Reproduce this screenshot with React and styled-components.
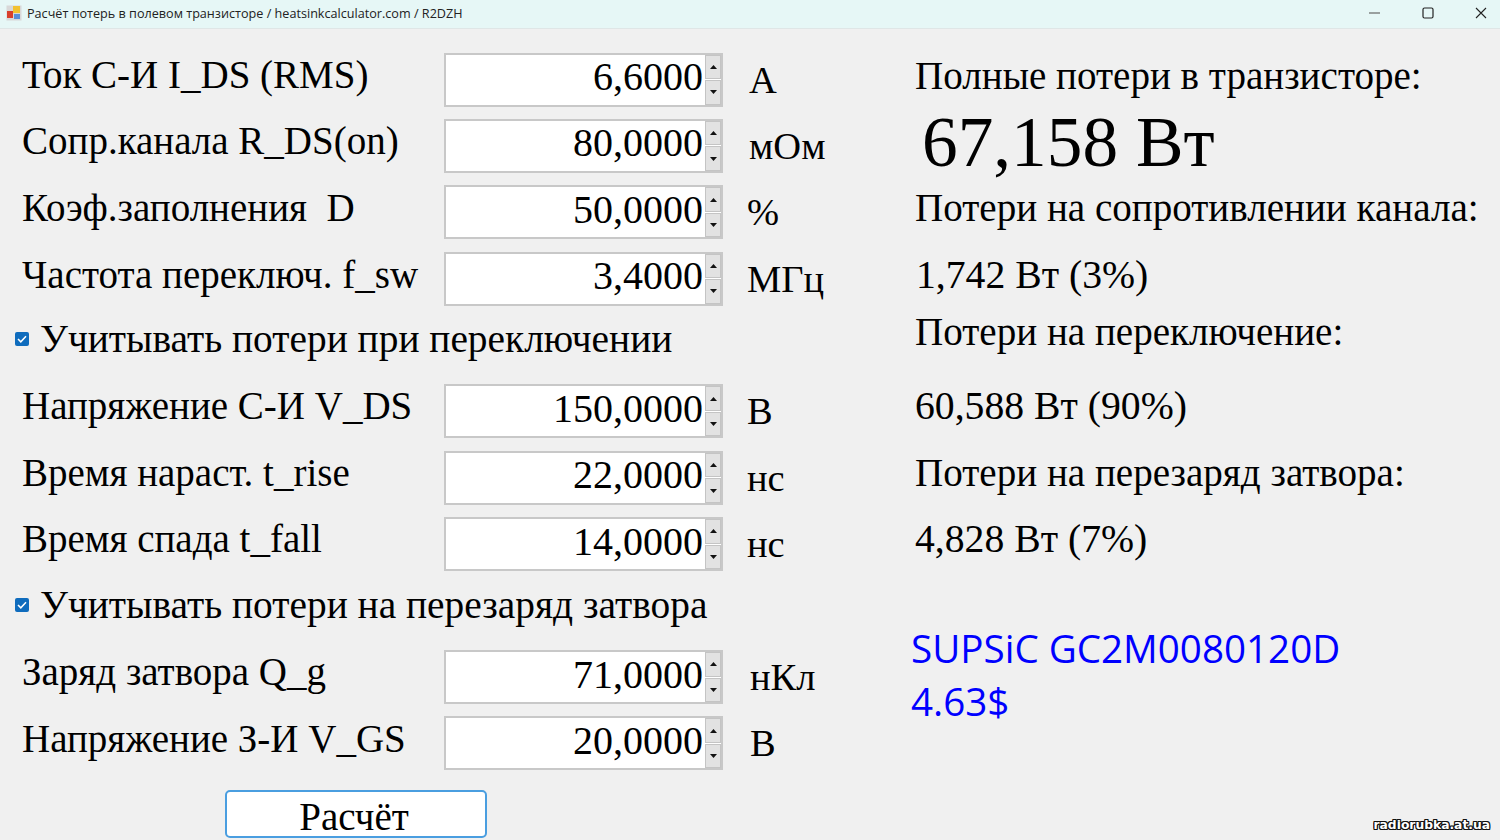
import React from 'react'
import styled, { createGlobalStyle } from 'styled-components'

const GlobalStyle = createGlobalStyle`
html, body {
  margin: 0;
  padding: 0;
  background: #f0f0f0;
}
`

const fields = [
  { type: 'field', label: 'Ток С-И I_DS (RMS)', value: '6,6000', unit: 'А', unitX: 26, labelUp: 10 },
  { type: 'field', label: 'Сопр.канала R_DS(on)', value: '80,0000', unit: 'мОм', unitX: 26, labelUp: 10 },
  { type: 'field', label: 'Коэф.заполнения  D', value: '50,0000', unit: '%', unitX: 24, labelUp: 9 },
  { type: 'field', label: 'Частота переключ. f_sw', value: '3,4000', unit: 'МГц', unitX: 24, labelUp: 9 },
  { type: 'check', label: 'Учитывать потери при переключении' },
  { type: 'field', label: 'Напряжение С-И V_DS', value: '150,0000', unit: 'В', unitX: 24, labelUp: 12 },
  { type: 'field', label: 'Время нараст. t_rise', value: '22,0000', unit: 'нс', unitX: 24, labelUp: 10 },
  { type: 'field', label: 'Время спада t_fall', value: '14,0000', unit: 'нс', unitX: 24, labelUp: 11 },
  { type: 'check', label: 'Учитывать потери на перезаряд затвора' },
  { type: 'field', label: 'Заряд затвора Q_g', value: '71,0000', unit: 'нКл', unitX: 27, labelUp: 12 },
  { type: 'field', label: 'Напряжение З-И V_GS', value: '20,0000', unit: 'В', unitX: 27, labelUp: 10 },
]

function AppIcon() {
  return (
    <svg width="16" height="16" viewBox="0 0 16 16">
      <rect x="0.5" y="0.5" width="15" height="15" fill="#d8d8d8" />
      <rect x="1" y="6" width="6" height="7" fill="#d8402c" />
      <rect x="7" y="1" width="7" height="7" fill="#f2c230" />
      <rect x="8" y="9" width="6" height="5" fill="#5a8fd8" />
    </svg>
  )
}

function Spinner() {
  return (
    <SpinBox>
      <SpinButton>
        <svg width="7" height="4" viewBox="0 0 7 4"><path d="M3.5 0 7 4H0z" fill="#111" /></svg>
      </SpinButton>
      <SpinButton>
        <svg width="7" height="4" viewBox="0 0 7 4"><path d="M0 0h7L3.500 4z" fill="#111" /></svg>
      </SpinButton>
    </SpinBox>
  )
}

export default function App() {
  return (
    <Page>
      <GlobalStyle />
      <TitleBar>
        <TitleLeft>
          <AppIcon />
          <TitleText>Расчёт потерь в полевом транзисторе / heatsinkcalculator.com / R2DZH</TitleText>
        </TitleLeft>
        <WindowButtons>
          <svg width="12" height="12" viewBox="0 0 12 12"><path d="M0 6h11" stroke="#666" strokeWidth="1.2" /></svg>
          <svg width="12" height="12" viewBox="0 0 12 12"><rect x="1" y="1" width="10" height="10" rx="1.5" fill="none" stroke="#222" strokeWidth="1.2" /></svg>
          <svg width="12" height="12" viewBox="0 0 12 12"><path d="M1 1l10 10M11 1 1 11" stroke="#222" strokeWidth="1.1" /></svg>
        </WindowButtons>
      </TitleBar>
      <Content>
        <LeftColumn>
          {fields.map((f) =>
            f.type === 'check' ? (
              <CheckRow key={f.label}>
                <CheckMark>
                  <svg width="10" height="8" viewBox="0 0 10 8"><path d="M1 4l2.800 2.800L9 1.300" fill="none" stroke="#fff" strokeWidth="1.5" /></svg>
                </CheckMark>
                <CheckLabel>{f.label}</CheckLabel>
              </CheckRow>
            ) : (
              <FieldRow key={f.label}>
                <FieldLabel $up={f.labelUp}>{f.label}</FieldLabel>
                <InputBox>
                  <InputValue>{f.value}</InputValue>
                  <Spinner />
                </InputBox>
                <Unit $x={f.unitX}>{f.unit}</Unit>
              </FieldRow>
            )
          )}
          <ButtonRow>
            <CalcButton>Расчёт</CalcButton>
          </ButtonRow>
        </LeftColumn>
        <RightColumn>
          <ResultLine $h={56}>Полные потери в транзисторе:</ResultLine>
          <TotalLine>67,158 Вт</TotalLine>
          <ResultLine $h={67}>Потери на сопротивлении канала:</ResultLine>
          <ResultValue $h={57} $x={1}>1,742 Вт (3%)</ResultValue>
          <ResultLine $h={74}>Потери на переключение:</ResultLine>
          <ResultValue $h={67}>60,588 Вт (90%)</ResultValue>
          <ResultLine>Потери на перезаряд затвора:</ResultLine>
          <ResultValue>4,828 Вт (7%)</ResultValue>
          <PartNote>SUPSiC GC2M0080120D<br />4.63$</PartNote>
        </RightColumn>
      </Content>
      <Watermark>radiorubka.at.ua</Watermark>
    </Page>
  )
}

const Page = styled.div`
position: relative;
width: 1500px;
height: 840px;
overflow: hidden;
background: #f0f0f0;
color: #000;
font-family: "Liberation Serif", serif;
`

const TitleBar = styled.div`
height: 29px;
box-sizing: border-box;
display: flex;
justify-content: space-between;
align-items: center;
padding: 0 13px 2px 6px;
background: #e6f7f6;
border-bottom: 1px solid #dfe6e6;
`

const TitleLeft = styled.div`
display: flex;
align-items: center;
gap: 5px;
`

const TitleText = styled.span`
font-family: "Open Sans", sans-serif;
font-size: 12.64px;
color: #222;
white-space: nowrap;
`

const WindowButtons = styled.div`
display: flex;
align-items: center;
gap: 41px;
`

const Content = styled.div`
display: flex;
padding-top: 24px;
`

const LeftColumn = styled.div`
width: 915px;
flex: none;
display: flex;
flex-direction: column;
gap: 13.4px;
padding-left: 22px;
box-sizing: border-box;
`

const FieldRow = styled.div`
height: 53px;
display: flex;
align-items: center;
`

const FieldLabel = styled.div`
width: 422px;
flex: none;
font-size: 39px;
white-space: pre;
margin-top: -${(p) => p.$up}px;
`

const InputBox = styled.div`
width: 279px;
height: 54px;
flex: none;
box-sizing: border-box;
display: flex;
align-items: center;
justify-content: flex-end;
background: #fff;
border: 2px solid #c8c8c8;
`

const InputValue = styled.div`
font-size: 40px;
padding: 0 2px 6px 0;
`

const SpinBox = styled.div`
width: 16px;
height: 100%;
flex: none;
display: flex;
flex-direction: column;
gap: 1px;
`

const SpinButton = styled.div`
flex: 1;
display: flex;
align-items: center;
justify-content: center;
background: #e2e2e2;
border: 1px solid #c4c4c4;
`

const Unit = styled.div`
margin-left: ${(p) => p.$x}px;
font-size: 38.5px;
`

const CheckRow = styled.div`
height: 53px;
display: flex;
align-items: center;
margin-left: -7px;
gap: 11px;
`

const CheckMark = styled.div`
width: 14px;
height: 14px;
flex: none;
margin-bottom: 12px;
border-radius: 2px;
background: #0f6cbd;
display: flex;
align-items: center;
justify-content: center;
`

const CheckLabel = styled.div`
font-size: 39.4px;
white-space: nowrap;
margin-top: -12px;
`

const ButtonRow = styled.div`
padding-left: 203px;
margin-top: 7px;
`

const CalcButton = styled.button`
width: 262px;
height: 48px;
padding: 4px 4px 0 0;
background: #fff;
border: 2px solid #4a9ee0;
border-radius: 5px;
color: #000;
font-family: "Liberation Serif", serif;
font-size: 39px;
line-height: 42px;
`

const RightColumn = styled.div`
flex: 1;
display: flex;
flex-direction: column;
`

const ResultLine = styled.div`
height: ${(p) => p.$h || 66}px;
padding-left: ${(p) => p.$x || 0}px;
font-size: 39.1px;
line-height: 46px;
white-space: nowrap;
`

const ResultValue = styled(ResultLine)`
font-size: 39.7px;
`

const TotalLine = styled.div`
height: 76px;
padding-left: 7px;
font-size: 71.3px;
line-height: 66px;
white-space: nowrap;
`

const PartNote = styled.div`
margin: 40px 0 0 -4px;
color: #0000ff;
font-family: "Open Sans", sans-serif;
font-size: 38.6px;
line-height: 53px;
`

const Watermark = styled.div`
position: absolute;
right: 10px;
bottom: 8px;
color: #fff;
font-family: "DejaVu Sans", sans-serif;
font-weight: bold;
font-size: 12.3px;
text-shadow: -1px 0 #111, 1px 0 #111, 0 -1px #111, 0 1px #111, -1px -1px #111, 1px 1px #111, 1px -1px #111, -1px 1px #111;
`
